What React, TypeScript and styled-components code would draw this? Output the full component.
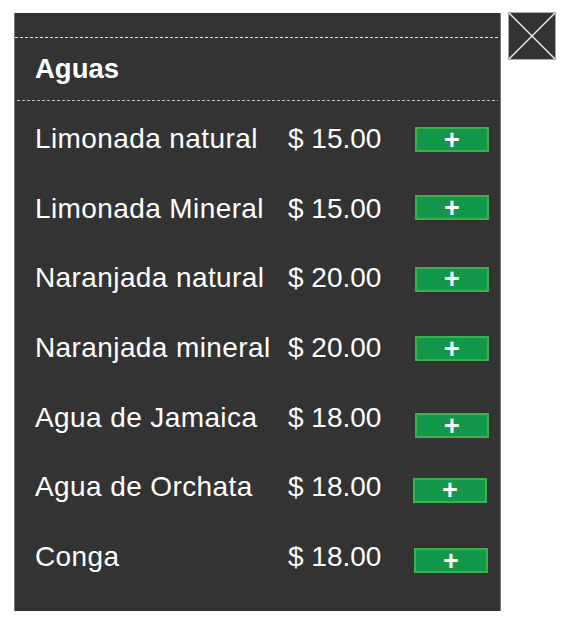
import React from 'react';
import styled, { createGlobalStyle } from 'styled-components';

const GlobalStyle = createGlobalStyle`
    body {
        margin: 0;
        background: #ffffff;
        font-family: "Liberation Sans", Arial, sans-serif;
    }
`;

const Page = styled.div`
    display: flex;
    align-items: flex-start;
    padding: 13px 0 0 14px;
`;

const Panel = styled.div`
    width: 485px;
    height: 598px;
    box-sizing: content-box;
    background-color: #333333;
    border-left: 1px solid #7a7a7a;
    border-right: 1px solid #7a7a7a;
    display: flex;
    flex-direction: column;
`;

const TopSpace = styled.div`
    height: 24px;
`;

const Dashed = styled.div<{ $tone: string; $inset: number }>`
    height: 1px;
    margin: 0 ${(p) => p.$inset}px;
    background-image: repeating-linear-gradient(to right, ${(p) => p.$tone} 0 3px, transparent 3px 5px);
`;

const Heading = styled.h2`
    margin: 0;
    padding: 15px 0 16px 20px;
    font-size: 27.5px;
    font-weight: bold;
    line-height: 31px;
    color: #ffffff;
`;

const List = styled.ul`
    list-style: none;
    margin: 0;
    padding: 3px 0 0 0;
`;

const Row = styled.li`
    height: 69.7px;
    display: grid;
    grid-template-columns: 253px 127px 74px;
    align-items: center;
    padding-left: 20px;
    color: #ffffff;
    font-size: 28px;
    line-height: 32px;
`;

const Name = styled.span`
    white-space: nowrap;
    letter-spacing: 0.4px;
`;

const Price = styled.span`
    white-space: nowrap;
`;

const AddButton = styled.button<{ $dx: number; $dy: number }>`
    width: 74px;
    height: 25px;
    padding: 0;
    box-sizing: border-box;
    background-color: #13974a;
    border: 2px solid #3cb04b;
    color: #ffffff;
    font-family: "Liberation Sans", Arial, sans-serif;
    font-size: 27px;
    font-weight: bold;
    line-height: 20px;
    text-align: center;
    transform: translate(${(p) => p.$dx}px, ${(p) => p.$dy}px);
`;

const CloseBox = styled.div`
    width: 48px;
    height: 48px;
    margin: -1px 0 0 7px;
    box-sizing: border-box;
    background-color: #333333;
    border: 1px solid #a8a8a8;
    display: flex;

    svg {
        width: 100%;
        height: 100%;
    }
`;

interface IDrink {
    name: string;
    price: string;
    dx: number;
    dy: number;
}

const drinks: IDrink[] = [
    { name: 'Limonada natural', price: '$ 15.00', dx: 0, dy: 1 },
    { name: 'Limonada Mineral', price: '$ 15.00', dx: 0, dy: -1 },
    { name: 'Naranjada natural', price: '$ 20.00', dx: 0, dy: 1 },
    { name: 'Naranjada mineral', price: '$ 20.00', dx: 0, dy: 1 },
    { name: 'Agua de Jamaica', price: '$ 18.00', dx: 0, dy: 8 },
    { name: 'Agua de Orchata', price: '$ 18.00', dx: -2, dy: 3 },
    { name: 'Conga', price: '$ 18.00', dx: -1, dy: 4 },
];

const App: React.FC = () => {
    return (
        <>
            <GlobalStyle />
            <Page>
                <Panel>
                    <TopSpace />
                    <Dashed $tone="#e6e6e6" $inset={0} />
                    <Heading>Aguas</Heading>
                    <Dashed $tone="#bdbdbd" $inset={2} />
                    <List>
                        {drinks.map((drink) => (
                            <Row key={drink.name}>
                                <Name>{drink.name}</Name>
                                <Price>{drink.price}</Price>
                                <AddButton $dx={drink.dx} $dy={drink.dy}>+</AddButton>
                            </Row>
                        ))}
                    </List>
                </Panel>
                <CloseBox>
                    <svg viewBox="0 0 46 46">
                        <line x1="0" y1="0" x2="46" y2="46" stroke="#e8e8e8" strokeWidth="1.5" />
                        <line x1="46" y1="0" x2="0" y2="46" stroke="#e8e8e8" strokeWidth="1.5" />
                    </svg>
                </CloseBox>
            </Page>
        </>
    );
}

export default App;
